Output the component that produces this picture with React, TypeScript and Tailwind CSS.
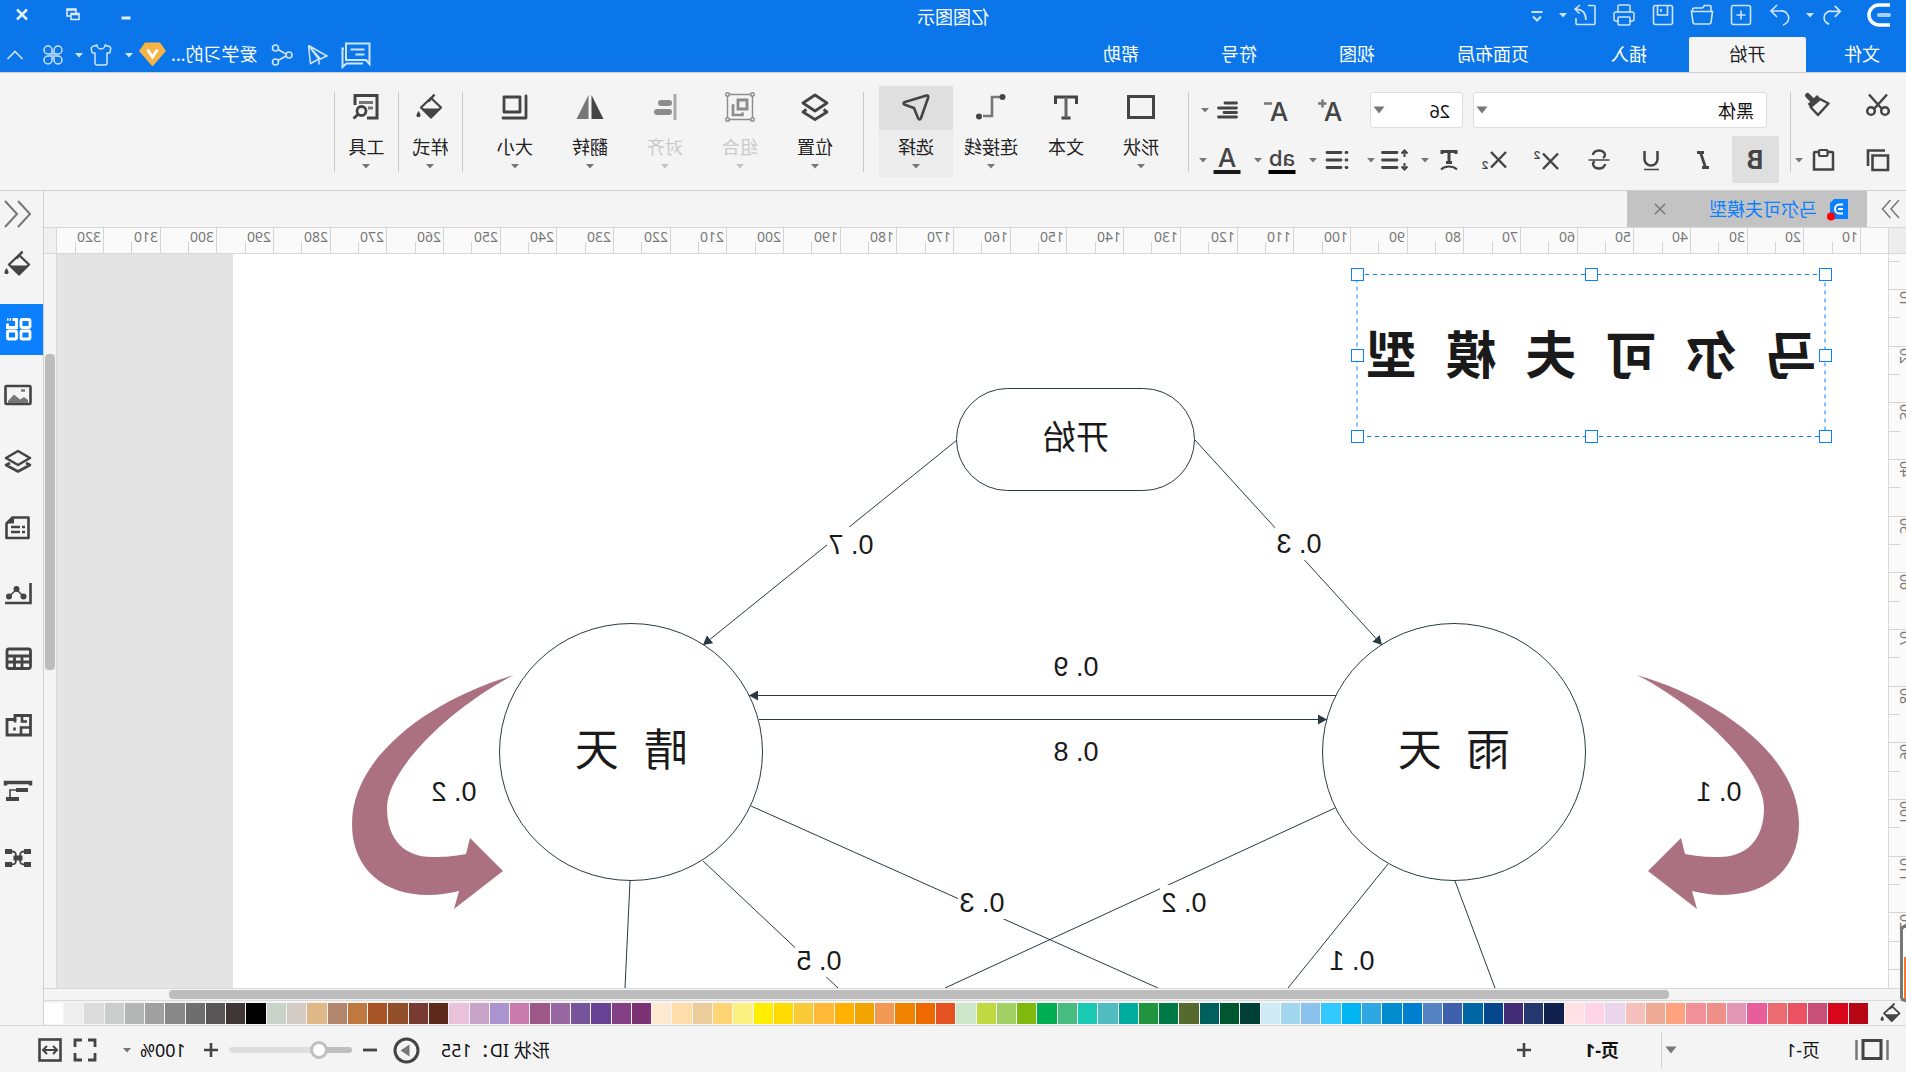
import type { ReactNode } from 'react'
import { Printer, Shirt } from 'lucide-react'

type Box = { w: number; h: number; children: ReactNode; className?: string }

const Svg = ({ w, h, children, className = '' }: Box) => (
  <svg
    width={w}
    height={h}
    viewBox={`0 0 ${w} ${h}`}
    fill="none"
    stroke="currentColor"
    className={`block shrink-0 overflow-visible ${className}`}
  >
    {children}
  </svg>
)

const Caret = ({ className = '' }: { className?: string }) => (
  <Svg w={12} h={12} className={className}>
    <path d="M2 4h8L6 8.500z" fill="currentColor" stroke="none" />
  </Svg>
)

const BigCaret = ({ className = '' }: { className?: string }) => (
  <Svg w={12} h={12} className={className}>
    <path d="M0.500 2.500h11L6 9.500z" fill="currentColor" stroke="none" />
  </Svg>
)

/* ---------- title bar ---------- */

const quickIcons = [
  {
    name: '恢复',
    icon: <path d="M15 2l6 6-6 6M21 8h-9a7 7 0 0 0-3 14" />,
  },
  {
    name: '新建',
    icon: (
      <>
        <rect x="2.500" y="2.500" width="19" height="19" rx="2" />
        <path d="M12 7.500v9M7.500 12h9" />
      </>
    ),
  },
  {
    name: '打开',
    icon: (
      <>
        <path d="M3 8V4a1.500 1.500 0 0 1 1.500-1.500h5l2 2.500h8a2 2 0 0 1 2 2v1.500" />
        <path d="M1.500 8.500h21l-1.500 11a2 2 0 0 1-2 1.500h-14a2 2 0 0 1-2-1.500z" />
      </>
    ),
  },
  {
    name: '保存',
    icon: (
      <>
        <rect x="2.500" y="2.500" width="19" height="19" rx="2" />
        <path d="M7.500 3v9h10V3M14 6v3" />
      </>
    ),
  },
]

const TitleBar = () => (
  <div className="grid h-[30px] grid-cols-[1fr_auto_1fr] items-center">
    <div className="flex items-center pl-4 text-[#cfe4fd]">
      <Svg w={22} h={24}>
        <path d="M0 2h11a10 10 0 0 1 0 20H0" stroke="#fff" strokeWidth="3.500" />
        <path d="M1 12h10" stroke="#a9cefa" strokeWidth="4" strokeLinecap="round" />
      </Svg>
      <div className="ml-6 flex items-center gap-1">
        <button aria-label="撤销">
          <svg viewBox="0 0 24 24" fill="none" stroke="currentColor" strokeWidth="1.800" className="size-6 p-px">
            <path d="M9 2L3 8l6 6M3 8h9a7 7 0 0 1 3 14" />
          </svg>
        </button>
        <Caret />
      </div>
      <div className="ml-3 flex items-center gap-[15px]">
        {quickIcons.map(item => (
          <button key={item.name} aria-label={item.name}>
            <svg viewBox="0 0 24 24" fill="none" stroke="currentColor" strokeWidth="1.600" className="size-6">
              {item.icon}
            </svg>
          </button>
        ))}
        <button aria-label="打印">
          <Printer className="size-6" strokeWidth={1.500} />
        </button>
        <button aria-label="导出">
          <svg viewBox="0 0 24 24" fill="none" stroke="currentColor" strokeWidth="1.600" className="size-6">
            <path d="M9 2.500H3a1 1 0 0 0-1 1V20.500a1 1 0 0 0 1 1h17a1 1 0 0 0 1-1V15" />
            <path d="M17 2l5 4-4.500 4.500M22 6c-7 0-11 3-11 11" />
          </svg>
        </button>
      </div>
      <Caret className="ml-1" />
      <Svg w={24} h={24} className="ml-2">
        <path d="M6.500 9h11" strokeWidth="2" />
        <path d="M8 13.500l4 4 4-4" strokeWidth="2" />
      </Svg>
    </div>
    <h1 className="mt-1 text-[18px] leading-6 text-white">亿图图示</h1>
    <div className="flex items-center justify-end gap-9 pr-3.5 text-[#e2effe]">
      <button aria-label="最小化">
        <Svg w={16} h={16}>
          <path d="M3.500 11h9" strokeWidth="3" />
        </Svg>
      </button>
      <button aria-label="还原">
        <Svg w={16} h={16}>
          <path d="M3 6.500h8v6H3zM3 7.500h8M6 6V2h9v7h-3.500M6 3h9" strokeWidth="1.500" />
        </Svg>
      </button>
      <button aria-label="关闭">
        <Svg w={16} h={16}>
          <path d="M3 2.500l10 10M13 2.500l-10 10" strokeWidth="2.500" />
        </Svg>
      </button>
    </div>
  </div>
)

const tabs = ['插入', '页面布局', '视图', '符号', '帮助']

const TabBar = () => (
  <div className="mt-[7px] flex h-[35px] items-stretch text-[18px] text-white">
    <button className="w-[100px] pl-[26px] text-left">文件</button>
    <button className="w-[117px] rounded-t-[2px] bg-[#f4f4f4] text-[#222]">开始</button>
    <div className="ml-px flex">
      {tabs.map(tab => (
        <button key={tab} className="px-[41px]">
          {tab}
        </button>
      ))}
    </div>
    <div className="ml-auto flex items-center pr-[7px] text-[#cfe4fd]">
      <button aria-label="消息">
        <Svg w={30} h={26}>
          <path d="M1.500 1.500h23.500v16.500H5l-3.500 4zM6.500 7.500h14M6.500 12.500h9" strokeWidth="2" />
          <path d="M27 6.500h1.500V25l-4-3.500H8" strokeWidth="2" />
        </Svg>
      </button>
      <button aria-label="发送" className="ml-3">
        <Svg w={22} h={22}>
          <path d="M20.500 1.500L2 12l6.500 3zM20.500 1.500L18.500 19.500l-7.500-4M20.500 1.500L10 15.500v5" strokeWidth="1.500" />
        </Svg>
      </button>
      <button aria-label="分享" className="ml-3.5">
        <Svg w={22} h={22}>
          <circle cx="4" cy="11" r="3" strokeWidth="1.600" />
          <circle cx="17.500" cy="4" r="3" strokeWidth="1.600" />
          <circle cx="17.500" cy="18" r="3" strokeWidth="1.600" />
          <path d="M7 10l8-4.500M7 12l8 4.500" strokeWidth="1.600" />
        </Svg>
      </button>
      <a href="#" className="ml-3.5 text-white">
        爱学习的...
      </a>
      <Svg w={27} h={25} className="ml-[5px]">
        <path d="M6 0.500h15l6 8.500L13.500 24.500 0 9z" fill="#f6b444" stroke="none" />
        <path d="M8.500 7.500l5 7.500 5-7.500" stroke="#fff" strokeWidth="3" />
      </Svg>
      <Caret className="ml-1" />
      <Shirt className="ml-2.5 size-6" strokeWidth={1.500} />
      <Caret className="ml-1" />
      <button aria-label="应用" className="ml-2.5">
        <Svg w={20} h={20}>
          <path
            d="M9 9H5a4 4 0 1 1 4-4zM11 9V5a4 4 0 1 1 4 4zM9 11v4a4 4 0 1 1-4-4zM11 11h4a4 4 0 1 1-4 4z"
            strokeWidth="1.500"
          />
        </Svg>
      </button>
      <button aria-label="收起功能区" className="ml-5">
        <Svg w={16} h={16}>
          <path d="M0.500 12L8 4.500l7.500 7.500" strokeWidth="1.600" />
        </Svg>
      </button>
    </div>
  </div>
)

/* ---------- ribbon ---------- */

const Separator = () => <div className="mt-[19px] h-20 w-px shrink-0 bg-[#c9c9c9]" />

const Letter = ({ children, size = 24, weight = 500, x = 12, y = 20 }: {
  children: ReactNode
  size?: number
  weight?: number
  x?: number
  y?: number
}) => (
  <text
    x={x}
    y={y}
    textAnchor="middle"
    fontSize={size}
    fontWeight={weight}
    fill="currentColor"
    stroke="none"
    className="font-['Inter',sans-serif]"
  >
    {children}
  </text>
)

const Clipboard = () => (
  <div className="flex w-[115px] shrink-0 flex-col pt-[19px]">
    <div className="flex h-9 items-start pl-4">
      <button aria-label="剪切">
        <Svg w={24} h={26}>
          <path d="M3 2.500l13.500 15M21 2.500L7.500 17.500" strokeWidth="2.500" />
          <circle cx="5" cy="19" r="3.800" strokeWidth="2.500" />
          <circle cx="19" cy="19" r="3.800" strokeWidth="2.500" />
        </Svg>
      </button>
      <button aria-label="格式刷" className="ml-9">
        <Svg w={26} h={26}>
          <path d="M1.500 11.500L10 7l9.500 8-7.500 8z" strokeWidth="2.500" strokeLinejoin="round" />
          <path d="M17.500 8.500L22.500 3.500" strokeWidth="5" strokeLinecap="round" />
          <path d="M11.500 4.500l9.500 9" strokeWidth="4" />
        </Svg>
      </button>
    </div>
    <div className="mt-2 flex h-12 items-center pl-4">
      <button aria-label="复制">
        <Svg w={24} h={24}>
          <path d="M2 7.500h15.500V22H2z" strokeWidth="2.600" />
          <path d="M5 2.500h17V18" strokeWidth="2.600" />
        </Svg>
      </button>
      <button aria-label="粘贴" className="ml-[31px]">
        <Svg w={24} h={24}>
          <path d="M7.500 4H3a1 1 0 0 0-1 1v16.500h19V5a1 1 0 0 0-1-1h-4" strokeWidth="2.500" />
          <rect x="7.500" y="2" width="8.500" height="6" rx="1" strokeWidth="2.200" />
        </Svg>
      </button>
      <Caret className="ml-1.5 text-[#777]" />
    </div>
  </div>
)

const scripts = [
  {
    name: '斜体',
    icon: <path d="M11 4.500h7M6 19.500h7M14.500 4.500l-5 15" strokeWidth="2.800" />,
  },
  {
    name: '下划线',
    icon: (
      <>
        <path d="M5.500 3v8a6 6 0 0 0 13 0V3" strokeWidth="2.500" />
        <path d="M4 21.500h15" strokeWidth="1.500" />
      </>
    ),
  },
  {
    name: '删除线',
    icon: (
      <>
        <path d="M18 7a6 4.500 0 0 0-12 0c0 1.500 1 2.500 2 3M6 16a6 4.500 0 0 0 12 0c0-1-.5-2-1.500-2.800" strokeWidth="2.400" />
        <path d="M1.500 12h21" strokeWidth="1.500" />
      </>
    ),
  },
  {
    name: '上标',
    icon: (
      <>
        <path d="M1 5.500l15 15.500M16 5.500l-15 15.500" strokeWidth="2.500" />
        <Letter x={22} y={11} size={11} weight={600}>2</Letter>
      </>
    ),
  },
  {
    name: '下标',
    icon: (
      <>
        <path d="M1 4l15 15.500M16 4l-15 15.500" strokeWidth="2.500" />
        <Letter x={22} y={21} size={11} weight={600}>2</Letter>
      </>
    ),
  },
]

const FontPanel = () => (
  <div className="w-[601px] shrink-0 pt-[19px] text-[#444]">
    <div className="flex h-9 items-center pl-[23px]">
      <div className="relative">
        <select
          aria-label="字体"
          className="block h-9 w-[294px] appearance-none rounded-[3px] border border-[#dcdde2] bg-white pt-0.5 pl-3 text-[18px] text-[#111]"
        >
          <option>黑体</option>
        </select>
        <BigCaret className="pointer-events-none absolute top-3 right-[3px] text-[#777]" />
      </div>
      <div className="relative ml-2.5">
        <select
          aria-label="字号"
          className="block h-9 w-[93px] appearance-none rounded-[3px] border border-[#dcdde2] bg-white pt-0.5 pl-3 text-[18px] text-[#111]"
        >
          <option>26</option>
        </select>
        <BigCaret className="pointer-events-none absolute top-3 right-[3px] text-[#777]" />
      </div>
      <button aria-label="增大字号" className="ml-[26px]">
        <Svg w={26} h={24}>
          <Letter x={11} y={23} size={26}>A</Letter>
          <path d="M17.500 5.500H26M21.500 1.500v8" strokeWidth="2.500" stroke="#777" />
        </Svg>
      </button>
      <button aria-label="减小字号" className="ml-7">
        <Svg w={26} h={24}>
          <Letter x={11} y={23} size={26}>A</Letter>
          <path d="M18 5.500h8" strokeWidth="2.500" stroke="#777" />
        </Svg>
      </button>
      <button aria-label="对齐方式" className="ml-[25px]">
        <Svg w={24} h={24}>
          <path d="M2.500 5H14M2.500 10h18M2.500 14.500H15M2.500 19h18" strokeWidth="2.800" strokeLinecap="round" />
        </Svg>
      </button>
      <Caret className="ml-1 text-[#777]" />
    </div>
    <div className="mt-2 flex h-[47px] items-center pl-[11px]">
      <button aria-label="加粗" className="flex size-[47px] items-center justify-center rounded-[2px] bg-[#dfdfdf]">
        <Svg w={24} h={24}>
          <Letter y={21} size={25} weight={700}>B</Letter>
        </Svg>
      </button>
      <div className="ml-[17px] flex gap-7">
        {scripts.map(item => (
          <button key={item.name} aria-label={item.name}>
            <Svg w={24} h={24}>{item.icon}</Svg>
          </button>
        ))}
      </div>
      <button aria-label="文字方向" className="ml-[22px]">
        <Svg w={24} h={24}>
          <path d="M5 6V3.500h14V6M12 3.500V14M9 14.500h6" strokeWidth="3" />
          <path d="M4 21.500c4-4 12-4 16 0" strokeWidth="2" />
        </Svg>
      </button>
      <Caret className="ml-1.5 text-[#777]" />
      <button aria-label="行距" className="ml-2.5">
        <Svg w={28} h={24}>
          <path d="M4.500 9V3M1.500 5.500l3-3 3 3M4.500 15v6M1.500 18.500l3 3 3-3" strokeWidth="2" />
          <path d="M12 4.500h14.500M12 12h14.500M12 19.500h14.500" strokeWidth="2.800" strokeLinecap="round" />
        </Svg>
      </button>
      <Caret className="ml-1 text-[#777]" />
      <button aria-label="项目符号" className="ml-4">
        <Svg w={24} h={24}>
          <path d="M2 4.500h1M2 12h1M2 19.500h1" strokeWidth="2.800" strokeLinecap="round" />
          <path d="M8 4.500h14M8 12h14M8 19.500h14" strokeWidth="2.800" strokeLinecap="round" />
        </Svg>
      </button>
      <Caret className="ml-1.5 text-[#777]" />
      <button aria-label="高亮颜色" className="ml-[11px]">
        <Svg w={28} h={28}>
          <Letter x={14} y={20} size={22}>ab</Letter>
          <path d="M0.500 26h27" stroke="#000" strokeWidth="4" />
        </Svg>
      </button>
      <Caret className="ml-1 text-[#777]" />
      <button aria-label="字体颜色" className="ml-[11px]">
        <Svg w={28} h={28}>
          <Letter x={14} y={21} size={26}>A</Letter>
          <path d="M0.500 26h27" stroke="#1a1a1a" strokeWidth="4" />
        </Svg>
      </button>
      <Caret className="ml-1 text-[#777]" />
    </div>
  </div>
)

type Tool = { label: string; icon: ReactNode; menu?: boolean; active?: boolean; disabled?: boolean }

const drawTools: Tool[] = [
  {
    label: '形状',
    menu: true,
    icon: <rect x="1.500" y="2.500" width="25" height="21" strokeWidth="3" />,
  },
  {
    label: '文本',
    icon: (
      <>
        <path d="M3.500 10V3h21v7M9.500 24h9" strokeWidth="3" />
        <path d="M14 3v21" stroke="#666" strokeWidth="3" />
      </>
    ),
  },
  {
    label: '连接线',
    menu: true,
    icon: (
      <>
        <path d="M5 3h8v19h9" stroke="#777" strokeWidth="2.600" />
        <circle cx="2.500" cy="3" r="3" fill="currentColor" stroke="none" />
        <circle cx="26" cy="22.500" r="3" fill="currentColor" stroke="none" />
      </>
    ),
  },
  {
    label: '选择',
    menu: true,
    active: true,
    icon: (
      <path
        d="M3.500 1.500L25 8c2 .8 2 2 0 2.800L16 14l-4 10c-1 2-2.200 2-3 0L1.800 3.500c-.4-1.500.2-2.300 1.700-2z"
        strokeWidth="2.600"
        strokeLinejoin="round"
      />
    ),
  },
]

const arrangeTools: Tool[] = [
  {
    label: '位置',
    menu: true,
    icon: (
      <>
        <path d="M14 1l12 8-12 8L2 9z" strokeWidth="2.800" strokeLinejoin="round" />
        <path d="M5.500 15.500L2 18l12 7.500L26 18l-3.500-2.500" strokeWidth="2.800" strokeLinejoin="round" />
      </>
    ),
  },
  {
    label: '组合',
    menu: true,
    disabled: true,
    icon: (
      <>
        <path d="M1.500 0.500h25v25h-25z" strokeWidth="1.400" />
        <path d="M7 6h9v9H7z" strokeWidth="2.800" />
        <path d="M19.500 11.500H21V21H11.500v-2.500" strokeWidth="2.600" />
        <g fill="#f4f4f4" strokeWidth="1.400">
          <circle cx="1.500" cy="0.500" r="1.800" />
          <circle cx="26.500" cy="0.500" r="1.800" />
          <circle cx="1.500" cy="25.500" r="1.800" />
          <circle cx="26.500" cy="25.500" r="1.800" />
        </g>
      </>
    ),
  },
  {
    label: '对齐',
    menu: true,
    disabled: true,
    icon: (
      <>
        <path d="M4 0v26" stroke="#aaa" strokeWidth="3" />
        <path d="M10 9h8M10 18h12" strokeWidth="6" strokeLinecap="round" />
      </>
    ),
  },
  {
    label: '翻转',
    menu: true,
    icon: (
      <>
        <path d="M12.500 1v24H0.500z" fill="currentColor" stroke="none" />
        <path d="M15.500 1v24h12z" fill="#777" stroke="none" />
      </>
    ),
  },
  {
    label: '大小',
    menu: true,
    icon: (
      <>
        <path d="M9 3h16v15H9z" strokeWidth="2.800" strokeLinejoin="round" />
        <path d="M3 2v22h23" strokeWidth="2.800" strokeLinejoin="round" strokeLinecap="round" />
      </>
    ),
  },
]

const Bucket = () => (
  <>
    <path d="M13 4L3 13.500 13 23.500l10-10z" strokeWidth="2.300" strokeLinejoin="round" />
    <path d="M4 14.500h18L13 23.500z" fill="currentColor" stroke="none" />
    <path d="M9.500 0.500l6 7" strokeWidth="2.500" />
    <path d="M25.500 17c3 4 2.500 6 0 6s-3-2 0-6z" fill="currentColor" stroke="none" />
  </>
)

const ToolButton = ({ tool, className = 'w-[74px]' }: { tool: Tool; className?: string }) => (
  <button
    disabled={tool.disabled}
    className={`mt-[13px] flex h-[91px] shrink-0 flex-col items-center rounded-[2px] ${tool.active ? 'bg-[#ececec]' : ''} ${className}`}
  >
    <span
      className={`flex h-11 w-full items-center justify-center ${tool.active ? 'bg-[#dfdfdf]' : ''} ${tool.disabled ? 'text-[#8c8c8c]' : 'text-[#444]'}`}
    >
      <Svg w={28} h={28}>{tool.icon}</Svg>
    </span>
    <span className={`mt-[5px] text-[18px] leading-6 ${tool.disabled ? 'text-[#cacaca]' : 'text-[#222]'}`}>{tool.label}</span>
    {tool.menu && <Caret className={`mt-px ${tool.disabled ? 'text-[#c4c4c4]' : 'text-[#777]'}`} />}
  </button>
)

const Ribbon = () => (
  <div className="flex h-[119px] shrink-0 items-start border-y border-[#cfcfcf] bg-[#f4f4f4] text-[#444]">
    <Clipboard />
    <Separator />
    <FontPanel />
    <Separator />
    <div className="ml-2.5 mr-[15px] flex gap-px">
      {drawTools.map(tool => (
        <ToolButton key={tool.label} tool={tool} />
      ))}
    </div>
    <Separator />
    <div className="ml-[11px] mr-[15px] flex gap-px">
      {arrangeTools.map(tool => (
        <ToolButton key={tool.label} tool={tool} />
      ))}
    </div>
    <Separator />
    <ToolButton className="w-[63px]" tool={{ label: '样式', menu: true, icon: <Bucket /> }} />
    <Separator />
    <ToolButton
      className="w-[63px]"
      tool={{
        label: '工具',
        menu: true,
        icon: (
          <>
            <path d="M13 24H3V1.500h22V11" strokeWidth="3" />
            <path d="M7 8.500h14M7 14h5" stroke="#777" strokeWidth="2.800" />
            <circle cx="18.500" cy="17" r="4.500" strokeWidth="2.800" />
            <path d="M21.500 20l5 4.500" strokeWidth="3" />
          </>
        ),
      }}
    />
    <Separator />
  </div>
)

/* ---------- workspace ---------- */

const DocTabs = () => (
  <div className="flex h-[37px] shrink-0 items-center border-b border-[#d9d9d9] bg-[#f4f4f4]">
    <button aria-label="展开左侧面板" className="flex w-[39px] justify-center pr-2.5 text-[#777]">
      <Svg w={18} h={20}>
        <path d="M1 1l8 9-8 9M9.500 1l8 9-8 9" strokeWidth="1.500" />
      </Svg>
    </button>
    <div className="flex h-9 w-[240px] items-center bg-[#c3c3c3] pl-[18px]">
      <Svg w={22} h={23}>
        <path d="M1 1h14l4 4v16H1z" fill="#0a80ff" stroke="none" />
        <path d="M6 6.500h4a4 4.500 0 0 1 0 9H6M6 11h5" stroke="#fff" strokeWidth="2" />
        <circle cx="18" cy="18.500" r="4" fill="#f00" stroke="none" />
      </Svg>
      <a href="#" className="ml-2.5 text-[18px] text-[#0a80ff]">马尔可夫模型</a>
      <button aria-label="关闭文档" className="ml-[43px] text-[#777]">
        <Svg w={12} h={12}>
          <path d="M1 1l10 10M11 1L1 11" strokeWidth="1.500" />
        </Svg>
      </button>
    </div>
  </div>
)

const STEP = 56.68
const topMarks = Array.from({ length: 32 }, (_, i) => ({
  value: (i + 1) * 10,
  at: Math.round(28 + i * STEP),
  half: Math.round(28 + (i + 0.5) * STEP),
}))
const sideMarks = Array.from({ length: 14 }, (_, i) => ({
  value: (i + 1) * 10,
  at: Math.round(35 + i * STEP),
  half: Math.round(35 + (i - 0.5) * STEP),
}))

const TopRuler = () => (
  <div className="flex h-[26px] shrink-0 border-b border-[#d9d9d9]">
    <div className="w-[18px] shrink-0 border-r border-[#d9d9d9] bg-[#ededed]" />
    <div className="min-w-0 flex-1 border-r border-[#d9d9d9] bg-[#fafafa]">
      <svg className="block h-[25px] w-full overflow-visible" fill="#777" fontSize="14">
        {topMarks.map(m => (
          <g key={m.value}>
            <path d={`M${m.at - 0.5} 0v25M${m.half - 0.5} 14v11`} stroke="#d4d4d4" />
            <text x={m.at + 2} y="14">{m.value}</text>
          </g>
        ))}
      </svg>
    </div>
    <div className="w-3 shrink-0 bg-[#f0f0f0]" />
  </div>
)

const SideRuler = () => (
  <div className="w-[18px] shrink-0 overflow-hidden border-r border-[#d9d9d9] bg-[#fafafa]">
    <svg className="block h-full w-full" fill="#777" fontSize="14">
      {sideMarks.map(m => (
        <g key={m.value}>
          <path d={`M0 ${m.at + 0.5}h17M6 ${m.half + 0.5}h11`} stroke="#d4d4d4" />
          <text transform={`translate(6 ${m.at + 2}) rotate(-90)`} textAnchor="end">{m.value}</text>
        </g>
      ))}
    </svg>
  </div>
)

const labels = [
  { text: '0. 7', x: 1055, y: 544 },
  { text: '0. 3', x: 607, y: 543 },
  { text: '0. 9', x: 830, y: 666 },
  { text: '0. 8', x: 830, y: 751 },
  { text: '0. 1', x: 187, y: 791 },
  { text: '0. 2', x: 1452, y: 791 },
  { text: '0. 3', x: 924, y: 902 },
  { text: '0. 2', x: 722, y: 902 },
  { text: '0. 5', x: 1087, y: 960 },
  { text: '0. 1', x: 554, y: 960 },
]

const handles = [
  [81, 274], [315, 274], [549, 274],
  [81, 355], [549, 355],
  [81, 436], [315, 436], [549, 436],
]

const loop =
  'M269 675C190 698 107 754 107 824C107 870 140 895 183 895C195 895 205 893 214 891L209 909L258 871L225 838L221 854C205 857 195 857 187 857C160 857 142 840 142 808C142 770 205 708 269 675z'

const Diagram = () => (
  <svg
    width="1655"
    height="734"
    viewBox="18 254 1655 734"
    className="block shrink-0 bg-white font-['Liberation_Sans','Noto_Sans_CJK_SC',sans-serif]"
  >
    <defs>
      <marker id="head" markerWidth="10" markerHeight="10" refX="9" refY="5" orient="auto" markerUnits="userSpaceOnUse">
        <path d="M0 0l9 5-9 5z" fill="#2a3a44" />
      </marker>
    </defs>
    <g fill="#ac7180">
      <path d={loop} />
      <path d={loop} transform="translate(1661 0) scale(-1 1)" />
    </g>
    <g fill="none" stroke="#2a3a44">
      <rect x="711.500" y="388.500" width="238" height="102" rx="51" />
      <ellipse cx="452" cy="752" rx="131.500" ry="128.500" />
      <ellipse cx="1275" cy="752" rx="131.500" ry="128.500" />
      <path d="M949 440L1203 645" markerEnd="url(#head)" />
      <path d="M711 440L524 645" markerEnd="url(#head)" />
      <path d="M570 695.500H1157" markerEnd="url(#head)" />
      <path d="M1147 719.500H579" markerEnd="url(#head)" />
      <path d="M571 808L961 988M518 864L618 988M451 881L411 988" />
      <path d="M1155 806L748 988M1203 861L1068 988M1276 881L1281 988" />
    </g>
    <g fill="#1a1a1a" textAnchor="middle">
      {labels.map(l => (
        <g key={`${l.x}-${l.y}`}>
          {l.x !== 187 && l.x !== 1452 && <rect x={l.x - 24} y={l.y - 17} width="48" height="34" fill="#fff" />}
          <text x={l.x} y={l.y + 10} fontSize="27">{l.text}</text>
        </g>
      ))}
      <text x="830" y="449" fontSize="33">开始</text>
      <text y="766" fontSize="44">
        <tspan x="418">雨</tspan>
        <tspan x="486">天</tspan>
      </text>
      <text y="766" fontSize="44">
        <tspan x="1240">晴</tspan>
        <tspan x="1309">天</tspan>
      </text>
      <text y="374" fontSize="51" fontWeight="700">
        <tspan x="115">马</tspan>
        <tspan x="195">尔</tspan>
        <tspan x="275">可</tspan>
        <tspan x="355">夫</tspan>
        <tspan x="435">模</tspan>
        <tspan x="515">型</tspan>
      </text>
    </g>
    <g fill="none" stroke="#0a80ff">
      <rect x="81" y="274.500" width="468" height="162" strokeDasharray="4 4" />
      {handles.map(([x, y]) => (
        <rect key={`${x}-${y}`} x={x - 6.5} y={y - 5.5} width="12" height="12" fill="#fff" />
      ))}
    </g>
  </svg>
)

const palette = [
  '#b60614', '#d8061b', '#c84f78', '#ea5262', '#ec6b70', '#e75e9b', '#e397b5', '#ef9088', '#f2909a', '#ffa27d',
  '#efaa95', '#f5bfbb', '#ead5ea', '#ffd4e6', '#ffe0e5', '#10214d', '#24386f', '#432c76', '#05468d', '#0067a6',
  '#3f60ad', '#5683c4', '#007fce', '#008bce', '#2ea7e2', '#00b5f1', '#31c9ff', '#8bc2eb', '#a1d8ef', '#d0ebf6',
  '#004036', '#00562f', '#00605e', '#576a2e', '#007947', '#20943e', '#00ac9e', '#52bbc2', '#1acab3', '#48bb80',
  '#00ae54', '#80b90d', '#a3d064', '#c0d940', '#cde6c9', '#e35220', '#ee6a00', '#f08300', '#f39956', '#f2a500',
  '#ffb000', '#ffb936', '#facb38', '#ffdb00', '#ffee00', '#fcf282', '#ffd472', '#ebcc9a', '#ffddab', '#fde8d0',
  '#7b3273', '#844084', '#694195', '#765499', '#9768a1', '#9d5887', '#ca7bae', '#aa93cf', '#c8a4c9', '#ebc2db',
  '#5c291b', '#783b31', '#924f2a', '#a75526', '#c07841', '#b2866c', '#dfb888', '#d5cbc5', '#c8d3ca', '#000000',
  '#3f3737', '#575556', '#6e6e6e', '#888888', '#9fa09f', '#b4b5b5', '#cbcdcc', '#dcdcdc', '#eeeeee', '#ffffff',
]

const Workspace = () => (
  <div className="flex min-w-0 flex-1 flex-col">
    <DocTabs />
    <TopRuler />
    <div className="flex min-h-0 flex-1">
      <SideRuler />
      <div className="min-w-0 flex-1 overflow-hidden border-r border-[#d9d9d9] bg-[#e4e4e4]">
        <Diagram />
      </div>
      <div className="w-3 shrink-0 bg-[#f4f4f4] pt-[100px]">
        <div className="mx-px h-[316px] rounded-[4px] bg-[#bdbdbd]" />
      </div>
    </div>
    <div className="h-[13px] shrink-0 border-y border-[#d9d9d9] bg-[#f4f4f4] py-px pr-[125px] pl-[237px]">
      <div className="h-[9px] rounded-[4px] bg-[#bdbdbd]" />
    </div>
    <div className="flex h-[25px] shrink-0 items-center border-b border-[#d9d9d9] bg-[#f4f4f4]">
      <button aria-label="填充颜色" className="w-[38px] shrink-0 pl-1 text-[#444]">
        <svg viewBox="0 0 28 26" fill="none" stroke="currentColor" className="block h-5 w-[22px]">
          <Bucket />
        </svg>
      </button>
      <div className="flex h-[21px] flex-1 gap-px">
        {palette.map(color => (
          <button key={color} aria-label={color} className="flex-1" style={{ backgroundColor: color }} />
        ))}
      </div>
    </div>
  </div>
)

const panels: { name: string; icon: ReactNode }[] = [
  { name: '填充', icon: <Bucket /> },
  {
    name: '符号库',
    icon: (
      <>
        <rect x="2" y="2.500" width="9" height="8" rx="1" strokeWidth="2.800" />
        <rect x="2" y="14" width="9" height="8" rx="1" strokeWidth="2.800" />
        <rect x="15.500" y="14" width="9" height="8" rx="1" strokeWidth="2.800" />
        <path d="M19.500 2.500h-4v8h9V6.500" strokeWidth="2.800" />
        <path d="M21 2.500h4.500" strokeWidth="2.600" strokeDasharray="1.500 1" />
      </>
    ),
  },
  {
    name: '图片',
    icon: (
      <>
        <rect x="1.500" y="3" width="25" height="18" rx="1" strokeWidth="2.600" />
        <path d="M4 20l0-3 4-3 4 2.500 6-5 6 6.500v2z" fill="#777" stroke="none" />
        <path d="M7 7.500h4" stroke="#777" strokeWidth="2.500" />
      </>
    ),
  },
  {
    name: '图层',
    icon: (
      <>
        <path d="M14 2l12 7-12 7L2 9z" strokeWidth="2.600" strokeLinejoin="round" />
        <path d="M6 14L2 16l12 6.500L26 16l-4-2" strokeWidth="2.600" strokeLinejoin="round" />
      </>
    ),
  },
  {
    name: '注释',
    icon: (
      <>
        <path d="M3.500 2.500h16l6 6V23h-22z" strokeWidth="2.600" strokeLinejoin="round" />
        <path d="M18 2.500v6h7z" fill="currentColor" stroke="none" />
        <path d="M7 12h3M12 12h9M7 17h3M12 17h9" strokeWidth="2.500" />
      </>
    ),
  },
  {
    name: '图表',
    icon: (
      <>
        <path d="M1.500 2v20h25.500" strokeWidth="2.600" />
        <path d="M8.500 15.500l7-7 7.500 7" strokeWidth="1.500" />
        <circle cx="8.500" cy="15.500" r="3" fill="currentColor" stroke="none" />
        <circle cx="15.500" cy="8" r="3" fill="currentColor" stroke="none" />
        <circle cx="23" cy="15.500" r="3" fill="currentColor" stroke="none" />
      </>
    ),
  },
  {
    name: '表格',
    icon: (
      <>
        <rect x="1.500" y="2" width="23.500" height="19.500" rx="2" strokeWidth="2.800" />
        <path d="M2 9h23M2 15h23M10 9v12M17.500 9v12" strokeWidth="2.800" />
      </>
    ),
  },
  {
    name: '平面图',
    icon: (
      <>
        <path d="M1.500 2.500H17v4h8V22H1.500z" strokeWidth="2.800" />
        <path d="M10 2.500v6H5M2 14.500h9V22M17 5.500v4M17.500 14.500v3" strokeWidth="2.600" />
      </>
    ),
  },
  {
    name: '路线图',
    icon: (
      <>
        <path d="M1.500 6.500v-3h25v3" strokeWidth="3.500" />
        <path d="M4 11h12M13 20h13" strokeWidth="4" />
        <path d="M16 11h6v8" strokeWidth="1.600" />
      </>
    ),
  },
  {
    name: '思维导图',
    icon: (
      <>
        <path d="M1 6.500h7M20 6.500h7M1 19.500h7M20 19.500h7M9.500 13h9" strokeWidth="5" />
        <path d="M8 6.500c4 0 4 2 4 6.500s0 6.500-4 6.500M20 6.500c-4 0-4 2-4 6.500s0 6.500 4 6.500" strokeWidth="1.800" />
      </>
    ),
  },
]

const SidePanels = () => (
  <aside className="w-11 shrink-0 border-b border-l border-[#cfcfcf] border-b-[#d9d9d9] bg-[#f4f4f4] text-[#444]">
    <button aria-label="收起右侧面板" className="flex h-[46px] items-center pl-3 text-[#777]">
      <Svg w={27} h={28}>
        <path d="M13 1L1 14l12 13M26 1L14 14l12 13" strokeWidth="2" />
      </Svg>
    </button>
    <nav className="mt-px flex flex-col gap-[15px]">
      {panels.map(panel => (
        <button
          key={panel.name}
          aria-label={panel.name}
          className={`flex h-[51px] items-center pl-[11px] ${panel.name === '符号库' ? 'bg-[#0a80ff] text-white' : ''}`}
        >
          <Svg w={28} h={26}>{panel.icon}</Svg>
        </button>
      ))}
    </nav>
  </aside>
)

const StatusBar = () => (
  <footer className="flex h-[46px] shrink-0 items-center bg-[#f4f4f4] pt-0.5 pr-[38px] pl-[17px] text-[18px] text-[#111]">
    <button aria-label="页面缩略图" className="text-[#444]">
      <Svg w={34} h={22}>
        <path d="M1.500 1v20M32.500 1v20" stroke="#777" strokeWidth="2.500" />
        <rect x="8" y="1.500" width="18" height="18" strokeWidth="3" />
      </Svg>
    </button>
    <div className="relative ml-[35px]">
      <select aria-label="页面" className="block h-9 w-[159px] appearance-none border-r border-[#d0d0d0] bg-transparent">
        <option>页-1</option>
      </select>
      <BigCaret className="pointer-events-none absolute top-3 right-1 text-[#777]" />
    </div>
    <button className="ml-[42px] font-bold">页-1</button>
    <button aria-label="新建页面" className="ml-[53px] text-[#444]">
      <Svg w={16} h={16}>
        <path d="M8 1v14M1 8h14" strokeWidth="2.600" />
      </Svg>
    </button>
    <span className="ml-auto">形状 ID：155</span>
    <button aria-label="播放" className="ml-[21px] text-[#444]">
      <Svg w={27} h={27}>
        <circle cx="13.500" cy="13.500" r="11.500" strokeWidth="3" />
        <path d="M10.500 7.500l9 6-9 6z" fill="#777" stroke="none" />
      </Svg>
    </button>
    <button aria-label="缩小" className="ml-[15px] text-[#444]">
      <Svg w={16} h={16}>
        <path d="M1 8h14" strokeWidth="2.800" />
      </Svg>
    </button>
    <input
      type="range"
      aria-label="缩放"
      defaultValue={23}
      className="ml-[10px] h-[18px] w-[123px] appearance-none bg-transparent [&::-webkit-slider-runnable-track]:h-1.5 [&::-webkit-slider-runnable-track]:rounded-full [&::-webkit-slider-runnable-track]:bg-linear-to-r [&::-webkit-slider-runnable-track]:from-[#bfbfbf] [&::-webkit-slider-runnable-track]:from-27% [&::-webkit-slider-runnable-track]:to-[#dedede] [&::-webkit-slider-runnable-track]:to-27% [&::-webkit-slider-thumb]:-mt-1.5 [&::-webkit-slider-thumb]:size-[18px] [&::-webkit-slider-thumb]:appearance-none [&::-webkit-slider-thumb]:rounded-full [&::-webkit-slider-thumb]:border-[3px] [&::-webkit-slider-thumb]:border-[#bfbfbf] [&::-webkit-slider-thumb]:bg-white"
    />
    <button aria-label="放大" className="ml-2.5 text-[#444]">
      <Svg w={16} h={16}>
        <path d="M8 1v14M1 8h14" strokeWidth="2.600" />
      </Svg>
    </button>
    <button className="ml-[17px] flex items-center gap-[7px]">
      100%
      <Caret className="text-[#777]" />
    </button>
    <button aria-label="全屏" className="ml-6 text-[#444]">
      <Svg w={24} h={24}>
        <path d="M2 9V2h7M15 2h7v7M22 15v7h-7M9 22H2v-7" strokeWidth="2.800" />
      </Svg>
    </button>
    <button aria-label="适合页宽" className="ml-[11px] text-[#444]">
      <Svg w={24} h={24}>
        <rect x="1.500" y="1.500" width="21" height="21" strokeWidth="2.600" />
        <path d="M5 12h14M9 8l-4 4 4 4M15 8l4 4-4 4" strokeWidth="2" />
      </Svg>
    </button>
  </footer>
)

export default function App() {
  return (
    <div className="relative flex h-screen -scale-x-100 flex-col overflow-hidden bg-[#f4f4f4] font-['Noto_Sans','Noto_Sans_CJK_SC',sans-serif]">
      <header className="h-[72px] shrink-0 bg-[#0a76ea]">
        <TitleBar />
        <TabBar />
      </header>
      <Ribbon />
      <main className="flex min-h-0 flex-1">
        <Workspace />
        <SidePanels />
      </main>
      <StatusBar />
      {/* edge of the docked floating ball */}
      <div className="absolute bottom-[70px] left-0 flex h-[77px] w-1.5 items-end rounded-r-[5px] border-y-[3px] border-r-[3px] border-[#777] bg-white">
        <div className="h-[42px] w-0.5 bg-[#f07830]" />
      </div>
    </div>
  )
}
